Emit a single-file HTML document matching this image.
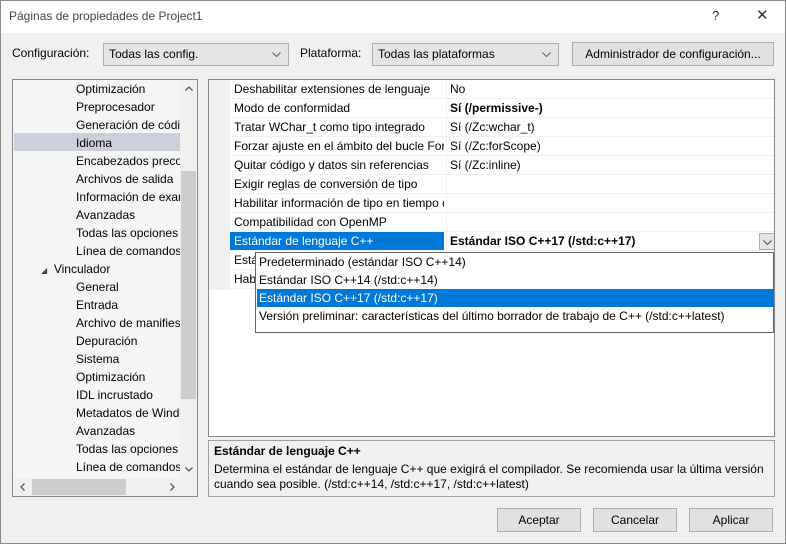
<!DOCTYPE html>
<html><head><meta charset="utf-8"><style>
*{margin:0;padding:0;box-sizing:border-box}
body{width:786px;height:544px;background:#f0f0f0;font-family:"Liberation Sans",sans-serif;font-size:12px;color:#000;position:relative;overflow:hidden}
.a{position:absolute;white-space:nowrap}
.win{position:absolute;left:0;top:0;width:786px;height:544px;border:1px solid #8a8a8a}
.title{left:1px;top:1px;width:784px;height:32px;background:#fff}
.combo{background:#e5e5e5;border:1px solid #adadad;height:23px;padding:3px 5px;line-height:15px}
.btn{background:#e1e1e1;border:1px solid #adadad;text-align:center;line-height:22px}
.tree{left:12px;top:79px;width:186px;height:418px;border:1px solid #828790;background:#f5f5f5;overflow:hidden}
.ti{position:absolute;left:63px;height:18px;line-height:18px}
.grid{left:208px;top:79px;width:567px;height:358px;border:1px solid #828790;background:#fff;overflow:hidden}
.row{position:absolute;left:21px;width:545px;height:19px;border-bottom:1px solid #f0f0f0;line-height:18px}
.n{position:absolute;left:0;width:214px;padding-left:4px;overflow:hidden;height:18px}
.v{position:absolute;left:216px;padding-left:3px;border-left:1px solid #f0f0f0;height:18px;width:330px}
.dd{left:255px;top:252px;width:519px;height:81px;border:1px solid #646464;background:#fff}
.di{position:absolute;left:1px;width:516px;height:18px;line-height:18px;padding-left:2px}
svg{position:absolute}
</style></head><body>
<div class="win"></div>
<div class="a title"></div>
<div class="a" style="left:9px;top:9px;color:#444;font-size:12px">Páginas de propiedades de Project1</div>
<div class="a" style="left:712px;top:8px;font-size:13px;color:#333">?</div>
<div class="a" style="left:756px;top:6px;font-size:15px;color:#333">✕</div>

<div class="a" style="left:12px;top:46px">Configuración:</div>
<div class="a combo" style="left:103px;top:43px;width:186px">Todas las config.<svg style="right:7px;top:8px" width="9" height="5"><path d="M0.5 0.5L4.5 4.5L8.5 0.5" fill="none" stroke="#555"/></svg></div>
<div class="a" style="left:300px;top:46px">Plataforma:</div>
<div class="a combo" style="left:372px;top:43px;width:187px">Todas las plataformas<svg style="right:7px;top:8px" width="9" height="5"><path d="M0.5 0.5L4.5 4.5L8.5 0.5" fill="none" stroke="#555"/></svg></div>
<div class="a btn" style="left:572px;top:42px;width:202px;height:24px">Administrador de configuración...</div>

<div class="a tree">
<div style="position:absolute;left:1px;top:53px;width:166px;height:18px;background:#ccd0dc"></div>
<div class="ti" style="top:0">Optimización</div>
<div class="ti" style="top:18px">Preprocesador</div>
<div class="ti" style="top:36px">Generación de código</div>
<div class="ti" style="top:54px">Idioma</div>
<div class="ti" style="top:72px">Encabezados precompilados</div>
<div class="ti" style="top:90px">Archivos de salida</div>
<div class="ti" style="top:108px">Información de examen</div>
<div class="ti" style="top:126px">Avanzadas</div>
<div class="ti" style="top:144px">Todas las opciones</div>
<div class="ti" style="top:162px">Línea de comandos</div>
<div class="ti" style="top:180px;left:28px"><span style="font-size:8px;color:#444">◢</span>&nbsp; Vinculador</div>
<div class="ti" style="top:198px">General</div>
<div class="ti" style="top:216px">Entrada</div>
<div class="ti" style="top:234px">Archivo de manifiesto</div>
<div class="ti" style="top:252px">Depuración</div>
<div class="ti" style="top:270px">Sistema</div>
<div class="ti" style="top:288px">Optimización</div>
<div class="ti" style="top:306px">IDL incrustado</div>
<div class="ti" style="top:324px">Metadatos de Windows</div>
<div class="ti" style="top:342px">Avanzadas</div>
<div class="ti" style="top:360px">Todas las opciones</div>
<div class="ti" style="top:378px">Línea de comandos</div>
<div style="position:absolute;left:167px;top:0;width:17px;height:398px;background:#f0f0f0"></div>
<div style="position:absolute;left:168px;top:91px;width:15px;height:228px;background:#cdcdcd"></div>
<svg style="left:172px;top:6px" width="8" height="5"><path d="M0.5 4.5L4 1L7.5 4.5" fill="none" stroke="#555" stroke-width="1.3"/></svg>
<svg style="left:172px;top:387px" width="8" height="5"><path d="M0.5 0.5L4 4L7.5 0.5" fill="none" stroke="#555" stroke-width="1.3"/></svg>
<div style="position:absolute;left:0;top:398px;width:184px;height:18px;background:#f0f0f0"></div>
<div style="position:absolute;left:19px;top:399px;width:94px;height:16px;background:#cdcdcd"></div>
<svg style="left:7px;top:403px" width="5" height="8"><path d="M4.5 0.5L1 4L4.5 7.5" fill="none" stroke="#555" stroke-width="1.3"/></svg>
<svg style="left:157px;top:403px" width="5" height="8"><path d="M0.5 0.5L4 4L0.5 7.5" fill="none" stroke="#555" stroke-width="1.3"/></svg>
</div>

<div class="a grid">
<div style="position:absolute;left:0;top:0;width:21px;height:210px;background:#f0f0f0"></div>
<div class="row" style="top:0"><div class="n">Deshabilitar extensiones de lenguaje</div><div class="v">No</div></div>
<div class="row" style="top:19px"><div class="n">Modo de conformidad</div><div class="v" style="font-weight:bold">Sí (/permissive-)</div></div>
<div class="row" style="top:38px"><div class="n">Tratar WChar_t como tipo integrado</div><div class="v">Sí (/Zc:wchar_t)</div></div>
<div class="row" style="top:57px"><div class="n">Forzar ajuste en el ámbito del bucle For</div><div class="v">Sí (/Zc:forScope)</div></div>
<div class="row" style="top:76px"><div class="n">Quitar código y datos sin referencias</div><div class="v">Sí (/Zc:inline)</div></div>
<div class="row" style="top:95px"><div class="n">Exigir reglas de conversión de tipo</div><div class="v"></div></div>
<div class="row" style="top:114px"><div class="n">Habilitar información de tipo en tiempo de ejecución</div><div class="v"></div></div>
<div class="row" style="top:133px"><div class="n">Compatibilidad con OpenMP</div><div class="v"></div></div>
<div class="row" style="top:152px"><div class="n" style="background:#0078d7;color:#fff">Estándar de lenguaje C++</div><div class="v" style="font-weight:bold">Estándar ISO C++17 (/std:c++17)<span style="position:absolute;right:0;top:1px;width:17px;height:17px;border:1px solid #adadad;background:#e5e5e5"><svg style="left:3px;top:6px" width="9" height="5"><path d="M0.5 0.5L4.5 4.5L8.5 0.5" fill="none" stroke="#444"/></svg></span></div></div>
<div class="row" style="top:171px"><div class="n">Estándar de lenguaje C</div><div class="v"></div></div>
<div class="row" style="top:190px"><div class="n">Habilitar módulos</div><div class="v"></div></div>
</div>

<div class="a dd">
<div class="di" style="top:0">Predeterminado (estándar ISO C++14)</div>
<div class="di" style="top:18px">Estándar ISO C++14 (/std:c++14)</div>
<div class="di" style="top:36px;background:#0078d7;color:#fff">Estándar ISO C++17 (/std:c++17)</div>
<div class="di" style="top:54px">Versión preliminar: características del último borrador de trabajo de C++ (/std:c++latest)</div>
</div>

<div class="a" style="left:208px;top:440px;width:567px;height:57px;border:1px solid #a0a0a0"></div>
<div class="a" style="left:214px;top:444px;font-weight:bold">Estándar de lenguaje C++</div>
<div class="a" style="left:214px;top:462px">Determina el estándar de lenguaje C++ que exigirá el compilador. Se recomienda usar la última versión</div>
<div class="a" style="left:214px;top:477px">cuando sea posible. (/std:c++14, /std:c++17, /std:c++latest)</div>

<div class="a btn" style="left:497px;top:508px;width:84px;height:24px">Aceptar</div>
<div class="a btn" style="left:593px;top:508px;width:84px;height:24px">Cancelar</div>
<div class="a btn" style="left:689px;top:508px;width:84px;height:24px">Aplicar</div>
</body></html>
